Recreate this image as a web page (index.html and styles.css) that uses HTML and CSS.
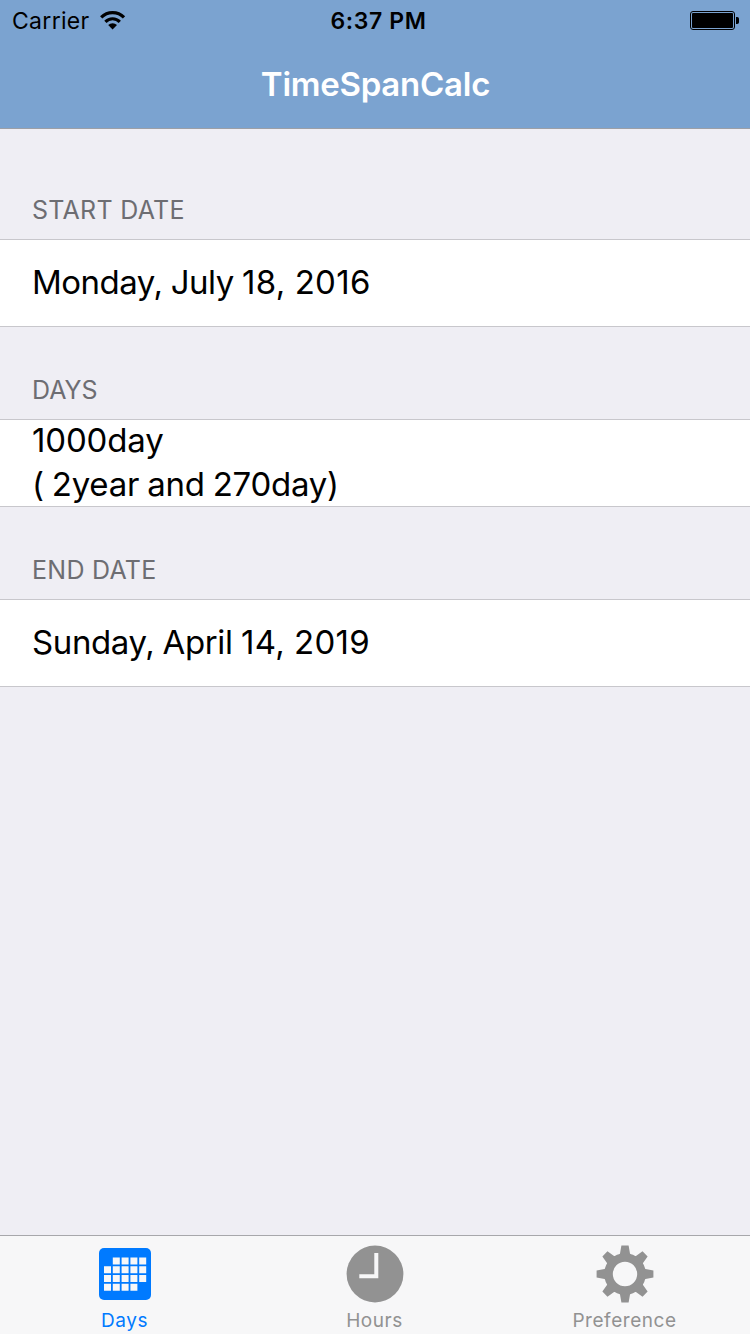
FILE: index.html
```html
<!DOCTYPE html>
<html lang="en">

<head>
    <meta charset="UTF-8" />
    <meta name="viewport" content="width=device-width, initial-scale=1.0">

    <title>TimeSpanCalc</title>

    <link rel="stylesheet" href="styles.css">
</head>

<body>
    <header class="navbar">
        <div class="statusbar">
            <div class="carrier">
                <span>Carrier</span>
                <svg class="wifi" width="26" height="20" viewBox="0 0 26 20">
                    <path d="M1.2 6.4A16 16 0 0 1 24 6.4" fill="none" stroke="#000" stroke-width="3.2" />
                    <path d="M5.4 10.8A10 10 0 0 1 19.8 10.8" fill="none" stroke="#000" stroke-width="3.1" />
                    <path d="M12.6 18.5L8.2 14.1A6 6 0 0 1 17 14.1Z" />
                </svg>
            </div>
            <span class="time">6:37 PM</span>
            <svg class="battery" width="50" height="19" viewBox="0 0 50 19">
                <rect x="0.5" y="0.5" width="44" height="18" rx="2.5" fill="none" stroke="#000" />
                <rect x="2" y="2" width="41" height="15" rx="1" />
                <path d="M46 6h1.2a1.8 1.8 0 0 1 1.8 1.8v3.4a1.8 1.8 0 0 1 -1.8 1.8h-1.2z" />
            </svg>
        </div>
        <h1 class="title">TimeSpanCalc</h1>
    </header>

    <main class="table">
        <h2 class="section first">START DATE</h2>
        <div class="cell"><span class="date">Monday, July <span class="num">18, 2016</span></span></div>

        <h2 class="section days">DAYS</h2>
        <div class="cell"><span>1000day</span><span class="years">( 2year and 270day)</span></div>

        <h2 class="section">END DATE</h2>
        <div class="cell"><span class="date end">Sunday, April <span class="num">14, 2019</span></span></div>
    </main>

    <nav class="tabbar">
        <div class="tab active">
            <svg width="58" height="58" viewBox="0 0 58 58" fill="currentColor">
                <rect x="3" y="3" width="52" height="52" rx="5" />
                <path class="squares" d="M16.8 12.4h7v7h-7z M25.6 12.4h7v7h-7z M34.4 12.4h7v7h-7z M43.2 12.4h7v7h-7z
                    M8 21.2h7v7h-7z M16.8 21.2h7v7h-7z M25.6 21.2h7v7h-7z M34.4 21.2h7v7h-7z M43.2 21.2h7v7h-7z
                    M8 30h7v7h-7z M16.8 30h7v7h-7z M25.6 30h7v7h-7z M34.4 30h7v7h-7z M43.2 30h7v7h-7z
                    M8 38.8h7v7h-7z M16.8 38.8h7v7h-7z M25.6 38.8h7v7h-7z M34.4 38.8h7v7h-7z" />
            </svg>
            <span>Days</span>
        </div>
        <div class="tab">
            <svg width="58" height="58" viewBox="0 0 58 58" fill="currentColor">
                <circle cx="29" cy="29" r="28.4" />
                <path d="M30.3 8V31.2H13.3" fill="none" stroke="#f7f7f8" stroke-width="4" />
            </svg>
            <span>Hours</span>
        </div>
        <div class="tab">
            <svg width="58" height="58" viewBox="0 0 58 58" fill="currentColor">
                <defs>
                    <path id="tooth" d="M22 12L24 8.5L25.4 0.6H32.6L34 8.5L36 12Z" />
                </defs>
                <circle cx="29" cy="29" r="16.5" fill="none" stroke="currentColor" stroke-width="8.6" />
                <use href="#tooth" />
                <use href="#tooth" transform="rotate(45 29 29)" />
                <use href="#tooth" transform="rotate(90 29 29)" />
                <use href="#tooth" transform="rotate(135 29 29)" />
                <use href="#tooth" transform="rotate(180 29 29)" />
                <use href="#tooth" transform="rotate(225 29 29)" />
                <use href="#tooth" transform="rotate(270 29 29)" />
                <use href="#tooth" transform="rotate(315 29 29)" />
            </svg>
            <span>Preference</span>
        </div>
    </nav>
</body>

</html>
```

FILE: styles.css
```css
* {
    box-sizing: border-box;
}

body {
    margin: 0;
    height: 1334px;
    display: flex;
    flex-direction: column;
    background-color: #efeef4;
    font-family: Inter, "Liberation Sans", sans-serif;
    color: #000;
    overflow: hidden;
}

span,
h1,
h2 {
    white-space: pre;
}

/* top bar */
.navbar {
    height: 129px;
    background-color: #7ba3d0;
    border-bottom: 1px solid #9c9fa6;
}

.statusbar {
    display: grid;
    grid-template-columns: 1fr auto 1fr;
    align-items: center;
    height: 40px;
    padding: 1px 10px 0 12px;
    font-size: 23px;
}

.carrier {
    display: flex;
    align-items: center;
    gap: 10px;
    letter-spacing: 0.3px;
}

.time {
    padding-left: 5px;
    font-weight: 600;
    letter-spacing: 0.6px;
}

.battery {
    justify-self: end;
}

.title {
    margin: 0;
    padding-left: 1px;
    line-height: 88px;
    text-align: center;
    font-size: 33px;
    font-weight: 600;
    letter-spacing: -0.25px;
    color: #fff;
}

/* grouped table */
.table {
    flex: 1;
}

.section {
    display: flex;
    align-items: flex-end;
    margin: 0;
    height: 92px;
    padding: 0 32px 13px;
    font-size: 25px;
    line-height: 32px;
    font-weight: 400;
    letter-spacing: 0.27px;
    color: #6d6d72;
}

.first {
    height: 110px;
}

.days {
    letter-spacing: 0;
}

.cell {
    display: flex;
    flex-direction: column;
    justify-content: center;
    height: 88px;
    padding: 0 32px 2px;
    background-color: #fff;
    border-top: 1px solid #c8c7cc;
    border-bottom: 1px solid #c8c7cc;
    font-size: 33px;
    line-height: 44px;
    letter-spacing: -0.15px;
}

.date {
    letter-spacing: -0.5px;
    word-spacing: -0.5px;
}

.end {
    letter-spacing: -0.4px;
}

.num {
    letter-spacing: 0.3px;
}

.years {
    letter-spacing: -0.25px;
    word-spacing: -1px;
}

/* bottom tabs */
.tabbar {
    display: grid;
    grid-template-columns: repeat(3, 1fr);
    height: 99px;
    background-color: #f7f7f8;
    border-top: 1px solid #a7a7ab;
}

.tab {
    display: flex;
    flex-direction: column;
    align-items: center;
    padding-top: 9px;
    color: #929292;
    font-size: 19px;
    line-height: 24px;
    letter-spacing: 0.55px;
}

.tab span {
    margin-top: 6px;
    padding-right: 1px;
}

.active {
    color: #007aff;
}

.squares {
    fill: #f7f7f8;
}
```
